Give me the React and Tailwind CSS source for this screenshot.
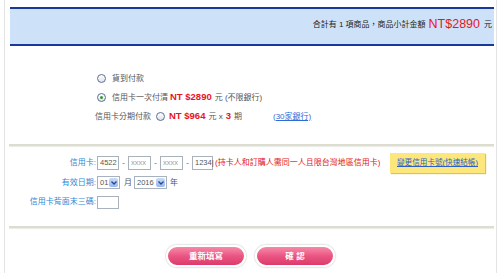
const font = { fontFamily: '"Liberation Sans", "Noto Sans CJK TC", sans-serif' };

function Radio({ checked }) {
  return (
    <span className="w-[9px] h-[9px] rounded-full border border-[#5d6f94] bg-linear-to-b from-white to-[#dfe3ea] flex items-center justify-center shrink-0">
      {checked && <span className="w-[3px] h-[3px] rounded-full bg-[#2f9e2f]" />}
    </span>
  );
}

function Box({ w, value, dim }) {
  return (
    <span
      className={`h-[14px] border border-[#a9b1bc] bg-white flex items-center pl-[2px] text-[7.5px] ${w} ${
        dim ? "text-[#9aa0a8]" : "text-[#555]"
      }`}
    >
      {value}
    </span>
  );
}

function Select({ w, value }) {
  return (
    <span className={`h-[13px] border border-[#a9b1bc] bg-white flex items-center justify-between pl-[2px] pr-[1px] text-[7.5px] text-[#555] ${w}`}>
      {value}
      <span className="w-[9px] h-[9px] rounded-[2px] bg-linear-to-b from-[#c9dcf7] to-[#98b9ea] flex items-center justify-center">
        <svg width="6" height="4" viewBox="0 0 6 4">
          <path d="M0.5 0.5 L3 3 L5.5 0.5" fill="none" stroke="#27449a" strokeWidth="1.3" />
        </svg>
      </span>
    </span>
  );
}

function Dash() {
  return <span className="w-[9px] text-center text-[8px] text-[#555]">-</span>;
}

export default function App() {
  return (
    <div className="w-[500px] h-[273px] bg-white overflow-hidden" style={font}>
      <div className="ml-[4px] w-[493px] h-full border-x border-[#e4e4e4] pt-[7px]">
        {/* summary band */}
        <div className="ml-[5px] w-[484px] h-[39px] border-y-2 border-[#17399c] bg-[#cde2f9] flex items-center justify-end pr-[2px] pb-[4px] text-[8px] text-[#222]">
          <span>合計有 1 項商品，商品小計金額</span>
          <span className="ml-[3px] text-[12.5px] text-[#e8141e]">NT$2890</span>
          <span className="ml-[4px]">元</span>
        </div>

        {/* payment options */}
        <div className="pt-[23px] text-[8px] text-[#555]">
          <div className="h-[19px] flex items-center pl-[92px]">
            <Radio />
            <span className="ml-[6px]">貨到付款</span>
          </div>
          <div className="h-[19px] flex items-center pl-[92px]">
            <Radio checked />
            <span className="ml-[6px]">信用卡一次付清</span>
            <span className="ml-[2px] text-[9.5px] font-bold text-[#e8141e]">NT $2890</span>
            <span className="ml-[3px]">元 (不限銀行)</span>
          </div>
          <div className="h-[19px] flex items-center pl-[90px]">
            <span>信用卡分期付款</span>
            <span className="ml-[5px]"><Radio /></span>
            <span className="ml-[4px] text-[9.5px] font-bold text-[#e8141e]">NT $964</span>
            <span className="ml-[3px]">元 x</span>
            <span className="ml-[3px] text-[9.5px] font-bold text-[#e8141e]">3</span>
            <span className="ml-[3px]">期</span>
            <a className="ml-[31px] text-[#2a6ed8] underline">(30家銀行)</a>
          </div>
        </div>

        <div className="mt-[18px] ml-[4px] w-[485px] h-[2px] bg-[#dcdcd0] shadow-[0_1px_1px_#ecece6]" />

        {/* card form */}
        <div className="pt-[7px] text-[8px]">
          <div className="h-[20px] flex items-center">
            <span className="w-[91px] text-right text-[#2a8ad4]">信用卡:</span>
            <span className="ml-[1px] flex items-center">
              <Box w="w-[22px]" value="4522" />
              <Dash />
              <Box w="w-[23px]" value="xxxx" dim />
              <Dash />
              <Box w="w-[23px]" value="xxxx" dim />
              <Dash />
              <Box w="w-[21px]" value="1234|" />
            </span>
            <span className="ml-[2px] text-[#e5141b]">(持卡人和訂購人需同一人且限台灣地區信用卡)</span>
            <button className="ml-auto mr-[11px] w-[95px] h-[20px] bg-[#fde77c] shadow-[1px_1px_1px_#d8c45a] text-[7.6px] text-[#2a5fcf] underline">
              變更信用卡號(快速結帳)
            </button>
          </div>
          <div className="h-[19px] flex items-center">
            <span className="w-[91px] text-right text-[#2a8ad4]">有效日期:</span>
            <span className="ml-[1px] flex items-center text-[#555]">
              <Select w="w-[23px]" value="01" />
              <span className="ml-[4px]">月</span>
              <span className="ml-[2px]"><Select w="w-[33px]" value="2016" /></span>
              <span className="ml-[3px]">年</span>
            </span>
          </div>
          <div className="h-[20px] flex items-center">
            <span className="w-[91px] text-right text-[#2a8ad4]">信用卡背面末三碼:</span>
            <span className="ml-[1px] w-[22px] h-[13px] border border-[#a9b1bc] bg-white" />
          </div>
        </div>

        <div className="mt-[14px] ml-[4px] w-[485px] h-[2px] bg-[#dcdcd0] shadow-[0_1px_1px_#ecece6]" />

        {/* actions */}
        <div className="mt-[17px] flex justify-center gap-[9px]">
          <button className="w-[80px] h-[22px] rounded-full border-2 border-white shadow-[0_0_2px_rgba(0,0,0,0.35)] bg-linear-to-b from-[#f68aa8] via-[#ea5583] to-[#dc3a6a] text-white font-bold text-[8.5px]">
            重新填寫
          </button>
          <button className="w-[80px] h-[22px] rounded-full border-2 border-white shadow-[0_0_2px_rgba(0,0,0,0.35)] bg-linear-to-b from-[#f68aa8] via-[#ea5583] to-[#dc3a6a] text-white font-bold text-[8.5px]">
            確 認
          </button>
        </div>
      </div>
    </div>
  );
}
